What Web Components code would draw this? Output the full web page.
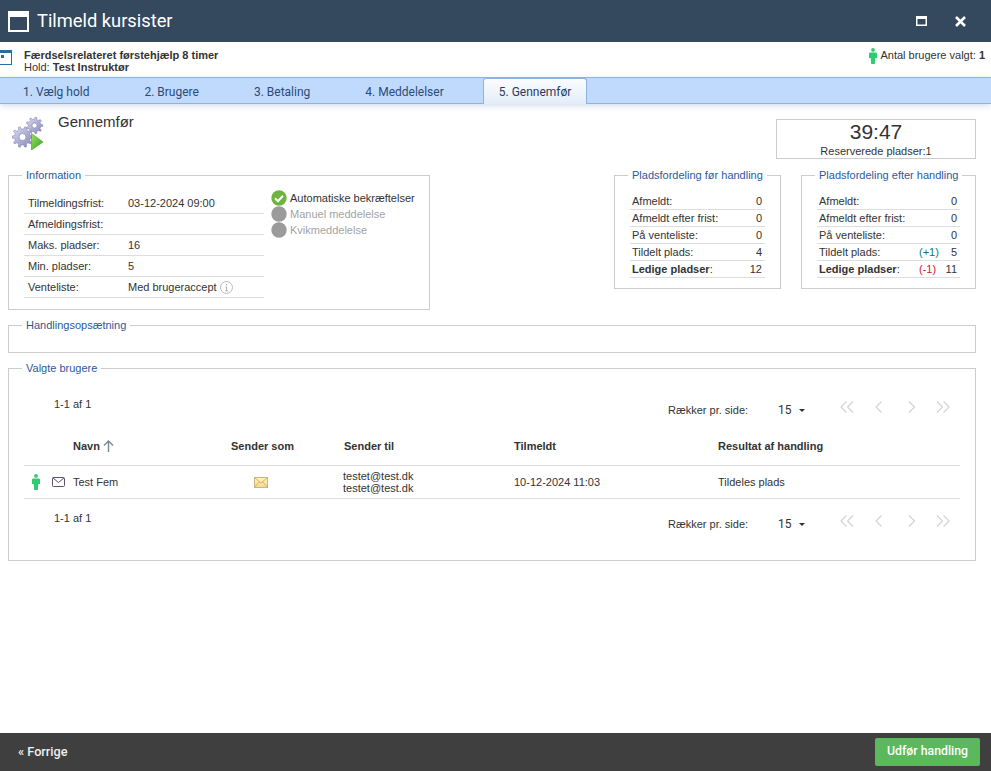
<!DOCTYPE html>
<html lang="da">
<head>
<meta charset="utf-8">
<title>Tilmeld kursister</title>
<style>
  html, body { margin: 0; height: 100%; background: #fff; }
  body { font: 11px "Liberation Sans", Arial, sans-serif; color: #333; overflow: hidden; }
</style>
</head>
<body>
<wizard-app></wizard-app>
<script>
const personIcon = (w, h) => `<svg width="${w}" height="${h}" viewBox="0 0 8 16" style="display:block"><circle cx="4" cy="1.9" r="1.9" fill="#2ecc71"/><path d="M1.4 4.5h5.200c.8 0 1.400.6 1.400 1.400v4.100H6.300L5.800 16H2.200L1.700 10H0V5.900c0-.8.6-1.400 1.400-1.400z" fill="#2ecc71"/></svg>`;

// toothed wheel outline for the step icon
const gearPath = (cx, cy, ro, ri, n) => {
  let d = '';
  for (let i = 0; i < n; i++) {
    const a = (i / n) * Math.PI * 2;
    const s = Math.PI / n;
    const pts = [[ri, a - s * 0.55], [ro, a - s * 0.3], [ro, a + s * 0.3], [ri, a + s * 0.55]];
    for (const [r, t] of pts) {
      d += `${d ? 'L' : 'M'}${(cx + r * Math.cos(t)).toFixed(2)} ${(cy + r * Math.sin(t)).toFixed(2)}`;
    }
  }
  return d + 'Z';
};

class TitleBar extends HTMLElement {
  constructor() {
    super();
    this.attachShadow({ mode: 'open' });
    this.shadowRoot.innerHTML = `
      <style>
        :host { display: flex; align-items: center; height: 42px; background: #34495e; color: #fff; padding: 0 25px 0 8px; box-sizing: border-box; }
        .title { font: 18.3px Roboto, sans-serif; margin-left: 8px; flex: 1; margin-top: -1px; }
        .btns { display: flex; align-items: center; gap: 28px; }
        svg { display: block; }
      </style>
      <svg width="21" height="21" viewBox="0 0 21 21"><rect x="1" y="1" width="19" height="19" fill="none" stroke="#fff" stroke-width="2"/><rect x="1" y="1" width="19" height="5" fill="#fff"/></svg>
      <div class="title"><slot></slot></div>
      <div class="btns">
        <svg width="11" height="10" viewBox="0 0 11 10"><rect x=".75" y=".75" width="9.500" height="8.500" fill="none" stroke="#fff" stroke-width="1.500"/><rect x="0" y="0" width="11" height="3" fill="#fff"/></svg>
        <svg width="11" height="11" viewBox="0 0 11 11"><path d="M1 1l9 9M10 1l-9 9" stroke="#fff" stroke-width="2.600"/></svg>
      </div>`;
  }
}

class SubHeader extends HTMLElement {
  constructor() {
    super();
    this.attachShadow({ mode: 'open' });
    this.shadowRoot.innerHTML = `
      <style>
        :host { display: flex; height: 35px; background: #fff; box-sizing: border-box; line-height: 12px; overflow: hidden; }
        .ico { width: 24px; margin-top: 8px; flex: none; }
        .ico svg { display: block; margin-left: -3px; }
        .course { margin-top: 7px; flex: 1; }
        .course b { display: block; }
        .course span b { display: inline; }
        .count { display: flex; gap: 3px; margin: 6px 6px 0 0; line-height: 15px; }
        svg { display: block; }
      </style>
      <div class="ico"><svg width="15" height="15" viewBox="0 0 15 15"><rect x=".5" y=".5" width="14" height="14" fill="#fff" stroke="#2b6ca3"/><rect x="1" y="1" width="13" height="2" fill="#2b6ca3"/><path d="M4 5h3v3H4z" fill="#2b6ca3"/></svg></div>
      <div class="course"><b>Færdselsrelateret førstehjælp 8 timer</b><span>Hold: <b>Test Instruktør</b></span></div>
      <div class="count">${personIcon(8, 16)}<span>Antal brugere valgt: <b>1</b></span></div>`;
  }
}

class WizardTabs extends HTMLElement {
  constructor() {
    super();
    this.attachShadow({ mode: 'open' });
    const tabs = ['1. Vælg hold', '2. Brugere', '3. Betaling', '4. Meddelelser', '5. Gennemfør'];
    this.shadowRoot.innerHTML = `
      <style>
        :host { display: flex; gap: 25px; height: 27px; box-sizing: border-box; padding: 0 0 0 8px; background: #bfdafc; border-top: 1px solid #8fb3e0; border-bottom: 1px solid #8fb3e0; box-shadow: 0 2px 6px rgba(120,150,190,.3); font: 12px Roboto, sans-serif; color: #2c4a78; }
        .tab { padding: 0 15px; line-height: 28px; height: 25px; }
        .tab.on { background: linear-gradient(#fbfdff, #e2edf9); border: 1px solid #8fb3e0; border-bottom: 0; border-radius: 3px 3px 0 0; color: #2c3a5c; margin: 0 -1px; height: 26px; line-height: 27px; box-sizing: border-box; position: relative; }
      </style>
      ${tabs.map((t, i) => `<div class="tab${i === 4 ? ' on' : ''}">${t}</div>`).join('')}`;
  }
}

class GroupBox extends HTMLElement {
  constructor() {
    super();
    this.attachShadow({ mode: 'open' });
    this.shadowRoot.innerHTML = `
      <style>
        :host { display: block; position: relative; border: 1px solid #ccc; box-sizing: border-box; }
        .legend { position: absolute; top: -7px; left: 13px; background: #fff; padding: 0 4px; line-height: 13px; color: #2a5a9e; white-space: nowrap; }
      </style>
      <div class="legend"></div>
      <slot></slot>`;
  }
  connectedCallback() {
    this.shadowRoot.querySelector('.legend').textContent = this.getAttribute('label');
  }
}

class InfoPanel extends HTMLElement {
  constructor() {
    super();
    this.attachShadow({ mode: 'open' });
    const rows = [['Tilmeldingsfrist:', '03-12-2024 09:00'], ['Afmeldingsfrist:', ''], ['Maks. pladser:', '16'], ['Min. pladser:', '5'], ['Venteliste:', 'Med brugeraccept']];
    const info = `<svg width="13" height="13" viewBox="0 0 13 13" style="margin-left:3px;flex:none"><circle cx="6.500" cy="6.500" r="6" fill="none" stroke="#bbb"/><path d="M6.500 3v1.400M5.400 6h1.200v3.600M5.200 9.800h2.600" fill="none" stroke="#aaa"/></svg>`;
    const dot = (ok) => `<svg width="16" height="16" viewBox="0 0 16 16" style="flex:none"><circle cx="8" cy="8" r="7.700" fill="${ok ? '#6cb33f' : '#9b9b9b'}"/>${ok ? '<path d="M4 8.200l3 3 5-5.400" fill="none" stroke="#fff" stroke-width="2"/>' : ''}</svg>`;
    this.shadowRoot.innerHTML = `
      <style>
        :host { display: flex; padding: 17px 0 0 15px; height: 133px; box-sizing: border-box; }
        .tbl { width: 240px; }
        .row { display: flex; align-items: center; height: 21px; border-bottom: 1px solid #ddd; padding-left: 4px; box-sizing: border-box; }
        .k { width: 100px; flex: none; }
        .v { display: flex; align-items: center; }
        .flags { margin: -3px 0 0 7px; }
        .flag { display: flex; align-items: center; gap: 3px; height: 16px; }
        .off { color: #a3a3a3; }
      </style>
      <div class="tbl">${rows.map(([k, v], i) => `<div class="row"><div class="k">${k}</div><div class="v">${v}${i === 4 ? info : ''}</div></div>`).join('')}</div>
      <div class="flags">
        <div class="flag">${dot(true)}<span>Automatiske bekræftelser</span></div>
        <div class="flag off">${dot(false)}<span>Manuel meddelelse</span></div>
        <div class="flag off">${dot(false)}<span>Kvikmeddelelse</span></div>
      </div>`;
  }
}

class SeatTable extends HTMLElement {
  constructor() {
    super();
    this.attachShadow({ mode: 'open' });
  }
  connectedCallback() {
    const vals = this.getAttribute('values').split(',');
    const diffs = (this.getAttribute('diffs') || ',,,,').split(',');
    const names = ['Afmeldt:', 'Afmeldt efter frist:', 'På venteliste:', 'Tildelt plads:', 'Ledige pladser:'];
    this.shadowRoot.innerHTML = `
      <style>
        :host { display: block; padding: 17px 15px 0 15px; height: 112px; box-sizing: border-box; }
        .row { display: flex; align-items: center; height: 17px; border-bottom: 1px solid #ddd; box-sizing: border-box; padding-left: 2px; }
        .k { flex: 1; }
        .d { width: 23px; }
        .v { width: 18px; text-align: right; padding-right: 3px; box-sizing: border-box; white-space: nowrap; }
        .last .k span { font-weight: bold; }
        .last .k span::after { content: ":"; font-weight: normal; }
        .plus { color: #0a7d6a; }
        .minus { color: #e0102f; }
      </style>
      ${names.map((n, i) => `<div class="row${i === 4 ? ' last' : ''}"><div class="k">${i === 4 ? '<span>Ledige pladser</span>' : n}</div>${diffs[i] ? `<div class="d ${diffs[i][1] === '+' ? 'plus' : 'minus'}">${diffs[i]}</div>` : ''}<div class="v">${vals[i]}</div></div>`).join('')}`;
  }
}

class PageBar extends HTMLElement {
  constructor() {
    super();
    this.attachShadow({ mode: 'open' });
    const ch = (d) => `<svg width="14" height="12" viewBox="0 0 14 12"><path d="${d}" fill="none" stroke="#d4d4d4" stroke-width="1.200"/></svg>`;
    this.shadowRoot.innerHTML = `
      <style>
        :host { display: flex; align-items: flex-start; height: 30px; padding-left: 30px; }
        .range { flex: 1; line-height: 13px; }
        .size { display: flex; align-items: center; margin-top: 5px; line-height: 13px; }
        .lbl { width: 110px; }
        .num { font: 12px Roboto, sans-serif; width: 21px; }
        .caret { width: 0; height: 0; border: 3px solid transparent; border-top: 3px solid #333; border-bottom: 0; }
        .nav { display: flex; gap: 18px; margin: 3px 10px 0 35px; }
        svg { display: block; }
      </style>
      <div class="range">1-1 af 1</div>
      <div class="size"><span class="lbl">Rækker pr. side:</span><span class="num">15</span><span class="caret"></span></div>
      <div class="nav">
        ${ch('M6.500 .5L1 6l5.500 5.500M13 .5L7.500 6 13 11.500')}${ch('M9.500 .5L4 6l5.500 5.500')}${ch('M5 .5L10.500 6 5 11.500')}${ch('M1 .5L6.500 6 1 11.500M7.500 .5L13 6l-5.500 5.500')}
      </div>`;
  }
}

class UserTable extends HTMLElement {
  constructor() {
    super();
    this.attachShadow({ mode: 'open' });
    this.shadowRoot.innerHTML = `
      <style>
        :host { display: block; }
        .row { display: grid; grid-template-columns: 49px 158px 113px 170px 204px 1fr; align-items: center; border-bottom: 1px solid #ddd; box-sizing: border-box; }
        .head { height: 38px; font-weight: bold; padding-bottom: 2px; }
        .body { height: 33px; line-height: 12px; }
        .ico { display: flex; align-items: center; gap: 12px; padding-left: 8px; }
        .navn { display: flex; align-items: center; gap: 3px; }
        .mid { width: 60px; display: flex; justify-content: center; }
        .mail { margin-left: -1px; }
        svg { display: block; }
      </style>
      <div class="row head">
        <div></div>
        <div class="navn">Navn <svg width="11" height="12" viewBox="0 0 11 12"><path d="M5.500 12V1M1 5.500l4.500-4.500L10 5.500" fill="none" stroke="#7d8794" stroke-width="1.400"/></svg></div>
        <div>Sender som</div><div>Sender til</div><div>Tilmeldt</div><div>Resultat af handling</div>
      </div>
      <div class="row body">
        <div class="ico">${personIcon(8, 16)}<svg width="13" height="10" viewBox="0 0 13 10"><rect x=".5" y=".5" width="12" height="9" rx="1" fill="none" stroke="#5d4f6e"/><path d="M1 1l5.500 4.500L12 1" fill="none" stroke="#5d4f6e"/></svg></div>
        <div>Test Fem</div>
        <div class="mid"><svg width="14" height="11" viewBox="0 0 14 11"><defs><linearGradient id="env" x1="0" y1="0" x2="0" y2="1"><stop offset="0" stop-color="#fff3c4"/><stop offset="1" stop-color="#f4d98c"/></linearGradient></defs><rect x=".5" y=".5" width="13" height="10" fill="url(#env)" stroke="#cdb57a"/><path d="M1 1l6 5 6-5M1 10l4.500-5.500M13 10L8.500 4.500" fill="none" stroke="#c9a95f" stroke-width=".8"/></svg></div>
        <div class="mail">testet@test.dk<br>testet@test.dk</div>
        <div>10-12-2024 11:03</div>
        <div>Tildeles plads</div>
      </div>`;
  }
}

class FooterBar extends HTMLElement {
  constructor() {
    super();
    this.attachShadow({ mode: 'open' });
    this.shadowRoot.innerHTML = `
      <style>
        :host { display: flex; align-items: center; justify-content: space-between; height: 38px; background: #3f3f3f; padding: 0 11px 1px 18px; box-sizing: border-box; color: #eee; }
        .back { font: 500 12.700px Roboto, sans-serif; margin-top: -1px; }
        .go { background: #5cb85c; color: #fff; border-radius: 2px; height: 28px; width: 105px; display: flex; align-items: center; justify-content: center; font: 500 12.300px Roboto, sans-serif; padding-bottom: 1px; box-sizing: border-box; }
      </style>
      <div class="back">« Forrige</div>
      <div class="go">Udfør handling</div>`;
  }
}

class WizardApp extends HTMLElement {
  constructor() {
    super();
    this.attachShadow({ mode: 'open' });
    this.shadowRoot.innerHTML = `
      <style>
        :host { display: flex; flex-direction: column; height: 771px; box-sizing: border-box; }
        main { flex: 1; padding: 0 15px 0 8px; }
        .top { display: flex; justify-content: space-between; height: 71px; }
        .step { display: flex; font-size: 15px; padding: 9px 0 0 4px; }
        .step svg { display: block; margin: 4px 14px 0 0; }
        .step span { line-height: 18px; }
        .timer { width: 200px; height: 40px; border: 1px solid #ccc; box-sizing: border-box; text-align: center; margin-top: 15px; line-height: 12px; }
        .timer div { font-size: 21px; line-height: 24px; margin-bottom: 1px; }
        .panels { display: flex; }
        .info { width: 422px; }
        .spacer { flex: 1; }
        .before { width: 167px; height: 114px; margin-right: 20px; }
        .after { width: 175px; height: 114px; }
        .setup { height: 28px; margin-top: 15px; }
        .users { height: 193px; margin-top: 15px; padding: 29px 15px 0 15px; }
      </style>
      <title-bar>Tilmeld kursister</title-bar>
      <sub-header></sub-header>
      <wizard-tabs></wizard-tabs>
      <main>
        <div class="top">
          <div class="step">
            <svg width="32" height="33" viewBox="0 0 32 33">
              <defs>
                <linearGradient id="g" x1="0" y1="0" x2="1" y2="1"><stop offset="0" stop-color="#dcdcf4"/><stop offset="1" stop-color="#8585b8"/></linearGradient>
                <linearGradient id="p" x1="0" y1="0" x2="1" y2="1"><stop offset="0" stop-color="#9fe05a"/><stop offset="1" stop-color="#2ea52a"/></linearGradient>
              </defs>
              <path d="${gearPath(22.5, 8.5, 8.3, 6.3, 9)}" fill="url(#g)" stroke="#7a7aa6" stroke-width=".5"/>
              <circle cx="22.500" cy="8.500" r="2.500" fill="#fff" stroke="#7a7aa6" stroke-width=".6"/>
              <path d="${gearPath(10.5, 20, 10.5, 8, 10)}" fill="url(#g)" stroke="#7a7aa6" stroke-width=".5"/>
              <circle cx="10.500" cy="20" r="3.500" fill="#fff" stroke="#7a7aa6" stroke-width=".6"/>
              <path d="M19.500 16.500L31 25l-11.500 8z" fill="url(#p)" stroke="#3d9a1e" stroke-width=".6"/>
            </svg>
            <span>Gennemfør</span>
          </div>
          <div class="timer"><div>39:47</div>Reserverede pladser:1</div>
        </div>
        <div class="panels">
          <group-box class="info" label="Information"><info-panel></info-panel></group-box>
          <div class="spacer"></div>
          <group-box class="before" label="Pladsfordeling før handling"><seat-table values="0,0,0,4,12"></seat-table></group-box>
          <group-box class="after" label="Pladsfordeling efter handling"><seat-table values="0,0,0,5,11" diffs=",,,(+1),(-1)"></seat-table></group-box>
        </div>
        <group-box class="setup" label="Handlingsopsætning"></group-box>
        <group-box class="users" label="Valgte brugere">
          <page-bar></page-bar>
          <user-table></user-table>
          <page-bar style="margin-top:13px"></page-bar>
        </group-box>
      </main>
      <footer-bar></footer-bar>`;
  }
}

customElements.define('title-bar', TitleBar);
customElements.define('sub-header', SubHeader);
customElements.define('wizard-tabs', WizardTabs);
customElements.define('group-box', GroupBox);
customElements.define('info-panel', InfoPanel);
customElements.define('seat-table', SeatTable);
customElements.define('page-bar', PageBar);
customElements.define('user-table', UserTable);
customElements.define('footer-bar', FooterBar);
customElements.define('wizard-app', WizardApp);
</script>
</body>
</html>
